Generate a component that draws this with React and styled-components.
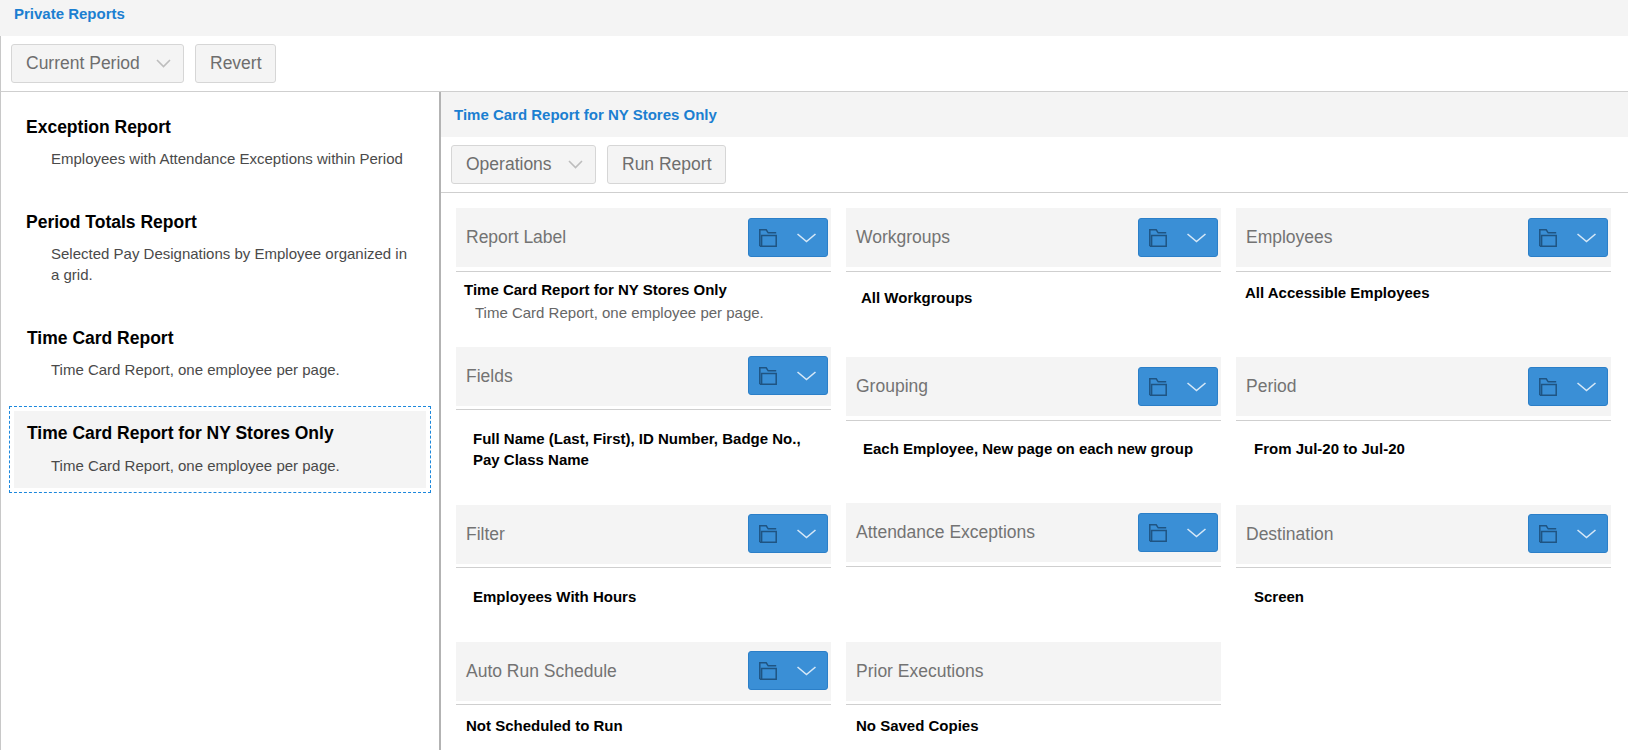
import React from "react";
import styled, { createGlobalStyle } from "styled-components";

const Global = createGlobalStyle`
  html, body { margin: 0; padding: 0; background: #fff; overflow: hidden; }
  body { font-family: "Liberation Sans", Arial, sans-serif; }
  * { box-sizing: border-box; }
`;

const Page = styled.div`
  width: 1628px;
  height: 750px;
  display: flex;
  flex-direction: column;
  overflow: hidden;
`;

const TitleBar = styled.div`
  height: ${(p) => p.$h}px;
  flex: none;
  background: #f4f4f4;
  color: #1b7fd1;
  font-size: 15px;
  font-weight: bold;
  padding: ${(p) => p.$top}px 0 0 ${(p) => p.$left}px;
  line-height: 16px;
`;

const Toolbar = styled.div`
  height: 56px;
  flex: none;
  display: flex;
  gap: 11px;
  padding: 8px 0 0 ${(p) => p.$left}px;
  border-bottom: 1px solid #cfcfcf;
  border-left: ${(p) => (p.$edge ? "1px solid #c8c8c8" : "none")};
`;

const ToolButton = styled.button`
  height: 39px;
  width: ${(p) => p.$w}px;
  padding: 0 0 0 14px;
  display: flex;
  align-items: center;
  background: #f4f4f4;
  border: 1px solid #d6d6d6;
  border-radius: 3px;
  color: #6e6e6e;
  font: 17.5px "Liberation Sans", Arial, sans-serif;
  text-align: left;
`;

const ButtonCaret = styled.svg`
  width: 15px;
  height: 9px;
  margin-left: auto;
  margin-right: 12px;
  fill: none;
  stroke: #bdbdbd;
  stroke-width: 1.6;
`;

const Main = styled.div`
  flex: 1;
  min-height: 0;
  display: flex;
`;

const LeftPanel = styled.div`
  width: 441px;
  flex: none;
  border-left: 1px solid #c8c8c8;
  border-right: 2px solid #b3b3b3;
  padding: 0 8px;
`;

const ReportItem = styled.div`
  height: ${(p) => p.$h}px;
  padding: 23px 16px 0 ${(p) => p.$left}px;
  border: 1px solid transparent;
`;

const SelectedItem = styled.div`
  height: 87px;
  padding: 4px;
  border: 1px dashed #1b87dc;
`;

const SelectedFill = styled.div`
  height: 100%;
  padding: 11px 0 0 13px;
  background: #f4f4f4;
`;

const ItemTitle = styled.div`
  font-size: 17.5px;
  font-weight: bold;
  color: #000;
  line-height: 22px;
`;

const ItemDesc = styled.div`
  font-size: 15px;
  color: #4a4a4a;
  line-height: 21px;
  margin: ${(p) => p.$gap}px 0 0 ${(p) => p.$indent}px;
`;

const RightPanel = styled.div`
  flex: 1;
  min-width: 0;
  display: flex;
  flex-direction: column;
`;

const Columns = styled.div`
  display: grid;
  grid-template-columns: repeat(3, 375px);
  column-gap: 15px;
  padding: 15px 0 0 15px;
`;

const Column = styled.div`
  display: flex;
  flex-direction: column;
`;

const Card = styled.div`
  height: ${(p) => p.$h}px;
  flex: none;
`;

const CardHead = styled.div`
  height: 59px;
  background: #f4f4f4;
  display: flex;
  align-items: center;
  justify-content: space-between;
  padding: 0 3px 0 10px;
  color: #737373;
  font-size: 17.5px;
`;

const Rule = styled.div`
  height: 1px;
  margin-top: ${(p) => p.$gap}px;
  background: #cfcfcf;
`;

const ActionButton = styled.div`
  width: 80px;
  height: 39px;
  margin-top: ${(p) => (p.$raise ? "-2px" : "0")};
  background: #3a8fd6;
  border: 1px solid #2b7fc8;
  border-radius: 3px;
  display: flex;
  align-items: center;
  padding-left: 10px;
  gap: 20px;
`;

const FolderIcon = styled.svg`
  width: 18px;
  height: 18px;
  fill: none;
  stroke: #1f5482;
  stroke-width: 1.5;
`;

const ChevronIcon = styled.svg`
  width: 19px;
  height: 10px;
  fill: none;
  stroke: #d6e8f7;
  stroke-width: 1.6;
`;

const CardText = styled.div`
  font-size: 15px;
  font-weight: bold;
  color: #000;
  line-height: ${(p) => p.$lh || 20}px;
  padding: ${(p) => p.$pad};
`;

const CardSub = styled.div`
  font-size: 15px;
  color: #666;
  line-height: 20px;
  padding: 3px 0 0 19px;
`;

const caret = (
  <ButtonCaret viewBox="0 0 15 9">
    <path d="M1 1l6.5 6.5L14 1" />
  </ButtonCaret>
);

function Action({ raise }) {
  return (
    <ActionButton $raise={raise}>
      <FolderIcon viewBox="0 0 18 18">
        <path d="M.8 17V.8h6.4l2 3h8" />
        <path d="M2.6 17.2V6.4h14.6v10.8zM.8 17.2h2" />
      </FolderIcon>
      <ChevronIcon viewBox="0 0 19 10">
        <path d="M.5 1l9 7.5 9-7.5" />
      </ChevronIcon>
    </ActionButton>
  );
}

function Section({ label, h, gap = 4, raise, pad, lh, action = true, text, sub }) {
  return (
    <Card $h={h}>
      <CardHead>
        <span>{label}</span>
        {action && <Action raise={raise} />}
      </CardHead>
      <Rule $gap={gap} />
      {text && <CardText $pad={pad} $lh={lh}>{text}</CardText>}
      {sub && <CardSub>{sub}</CardSub>}
    </Card>
  );
}

export default function App() {
  return (
    <Page>
      <Global />
      <TitleBar $h={36} $top={6} $left={14}>Private Reports</TitleBar>
      <Toolbar $edge $left={10}>
        <ToolButton $w={173}>Current Period{caret}</ToolButton>
        <ToolButton $w={81}>Revert</ToolButton>
      </Toolbar>
      <Main>
        <LeftPanel>
          <ReportItem $h={95} $left={16}>
            <ItemTitle>Exception Report</ItemTitle>
            <ItemDesc $gap={10} $indent={25}>Employees with Attendance Exceptions within Period</ItemDesc>
          </ReportItem>
          <ReportItem $h={116} $left={16}>
            <ItemTitle>Period Totals Report</ItemTitle>
            <ItemDesc $gap={10} $indent={25}>Selected Pay Designations by Employee organized in<br />a grid.</ItemDesc>
          </ReportItem>
          <ReportItem $h={103} $left={17}>
            <ItemTitle>Time Card Report</ItemTitle>
            <ItemDesc $gap={10} $indent={24}>Time Card Report, one employee per page.</ItemDesc>
          </ReportItem>
          <SelectedItem>
            <SelectedFill>
              <ItemTitle>Time Card Report for NY Stores Only</ItemTitle>
              <ItemDesc $gap={11} $indent={24}>Time Card Report, one employee per page.</ItemDesc>
            </SelectedFill>
          </SelectedItem>
        </LeftPanel>
        <RightPanel>
          <TitleBar $h={45} $top={15} $left={13}>Time Card Report for NY Stores Only</TitleBar>
          <Toolbar $left={10}>
            <ToolButton $w={145}>Operations{caret}</ToolButton>
            <ToolButton $w={119}>Run Report</ToolButton>
          </Toolbar>
          <Columns>
            <Column>
              <Section label="Report Label" h={139} pad="8px 0 0 8px" text="Time Card Report for NY Stores Only" sub="Time Card Report, one employee per page." />
              <Section label="Fields" h={158} gap={3} raise pad="18px 0 0 17px" lh={21} text={<>Full Name (Last, First), ID Number, Badge No.,<br />Pay Class Name</>} />
              <Section label="Filter" h={137} gap={3} raise pad="19px 0 0 17px" text="Employees With Hours" />
              <Section label="Auto Run Schedule" h={100} gap={3} raise pad="11px 0 0 10px" text="Not Scheduled to Run" />
            </Column>
            <Column>
              <Section label="Workgroups" h={149} pad="16px 0 0 15px" text="All Workgroups" />
              <Section label="Grouping" h={146} pad="18px 0 0 17px" text="Each Employee, New page on each new group" />
              <Section label="Attendance Exceptions" h={139} />
              <Section label="Prior Executions" h={100} gap={3} action={false} pad="11px 0 0 10px" text="No Saved Copies" />
            </Column>
            <Column>
              <Section label="Employees" h={149} pad="11px 0 0 9px" text="All Accessible Employees" />
              <Section label="Period" h={148} pad="18px 0 0 18px" text="From Jul-20 to Jul-20" />
              <Section label="Destination" h={137} gap={3} raise pad="19px 0 0 18px" text="Screen" />
            </Column>
          </Columns>
        </RightPanel>
      </Main>
    </Page>
  );
}
